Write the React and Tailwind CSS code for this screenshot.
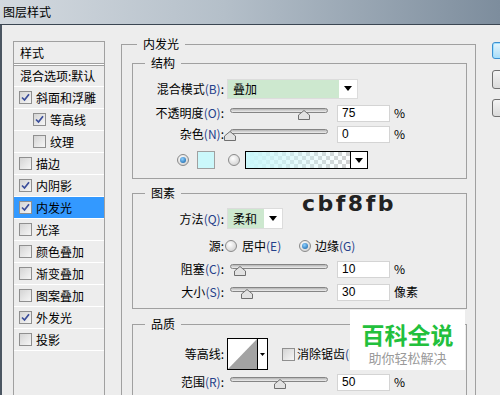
import React from 'react';

const Check = ({ checked }) => (
    <span className="w-[13px] h-[13px] border border-[#8f8f8f] bg-[linear-gradient(135deg,#d4d4d4,#f6f6f6)] flex items-center justify-center shrink-0">
        {checked && (
            <svg width="9" height="9" viewBox="0 0 9 9">
                <path d="M1 4.5 L3.5 7 L8 1.2" stroke="#3a4d9a" strokeWidth="1.7" fill="none" />
            </svg>
        )}
    </span>
);

const Radio = ({ on }) => (
    <span className="w-[12px] h-[12px] rounded-full border border-[#8a8a8a] bg-[radial-gradient(circle_at_40%_35%,#ffffff,#c8c8c8)] flex items-center justify-center shrink-0">
        {on && <span className="w-[6px] h-[6px] rounded-full bg-[radial-gradient(circle_at_40%_35%,#8fd0ff,#0a5aa0)]" />}
    </span>
);

const Arrow = () => (
    <svg width="8" height="5" viewBox="0 0 8 5">
        <path d="M0 0 H8 L4 5 Z" fill="#000" />
    </svg>
);

const Label = ({ text, keyChar }) => (
    <span className="w-[91px] text-right shrink-0 whitespace-nowrap">
        {text}
        {keyChar && <span className="text-[#24408a]">({keyChar})</span>}:
    </span>
);

const Slider = ({ pos }) => (
    <div className="relative w-[98px] h-[20px] ml-[6px] shrink-0">
        <div className="absolute left-0 right-0 top-[5px] h-[5px] rounded-full border border-[#858585] bg-[linear-gradient(#b5b5b5,#eeeeee)]" />
        <svg className="absolute top-[7px]" style={{ left: pos - 6 }} width="12" height="10" viewBox="0 0 12 10">
            <path d="M0.5 9.5 V5 L6 0.5 L11.5 5 V9.5 Z" fill="#e2e2e2" stroke="#6f6f6f" />
        </svg>
    </div>
);

const NumBox = ({ value }) => (
    <div className="ml-[9px] w-[53px] h-[17px] border border-[#d4d4d4] bg-white pl-[4px] text-[12px] leading-[15px] font-['Liberation_Sans'] shrink-0">
        {value}
    </div>
);

const SliderRow = ({ text, keyChar, pos, value, unit, className }) => (
    <div className={`flex items-center h-[20px] ${className}`}>
        <Label text={text} keyChar={keyChar} />
        <Slider pos={pos} />
        <NumBox value={value} />
        <span className="ml-[4px]">{unit}</span>
    </div>
);

const styles = [
    { name: '斜面和浮雕', checked: true },
    { name: '等高线', checked: true, indent: true },
    { name: '纹理', checked: false, indent: true },
    { name: '描边', checked: false },
    { name: '内阴影', checked: true },
    { name: '内发光', checked: true, active: true },
    { name: '光泽', checked: false },
    { name: '颜色叠加', checked: false },
    { name: '渐变叠加', checked: false },
    { name: '图案叠加', checked: false },
    { name: '外发光', checked: true },
    { name: '投影', checked: false },
];

export default function App() {
    return (
        <div className="relative w-[500px] h-[395px] overflow-hidden bg-[#ededed] text-[12px] leading-[14px] text-black font-['Noto_Sans_CJK_SC',sans-serif]">
            {/* Title bar */}
            <div className="h-[25px] border-b border-[#3b4652] bg-[linear-gradient(to_right,#d3d9df,#b4bfc9_45%,#7d8d9d)] flex items-center pl-[3px]">
                <span className="text-[12px]">图层样式</span>
            </div>

            <div className="flex items-start border-l-[2px] border-[#4b5662] h-[370px]">
                {/* Style list */}
                <div className="ml-[11px] mt-[16px] w-[92px] h-[360px] shrink-0 border border-b-0 border-[#a0a0a0]">
                    <div className="h-[21px] flex items-center pl-[6px]">样式</div>
                    <div className="h-[3px] border-y border-[#a0a0a0] bg-white" />
                    <div className="h-[21px] flex items-center pl-[6px] border-b border-white whitespace-nowrap">混合选项:默认</div>
                    {styles.map(s => (
                        <div
                            key={s.name}
                            className={`h-[22px] flex items-center gap-[4px] border-b border-white ${s.indent ? 'pl-[19px]' : 'pl-[5px]'} ${s.active ? 'bg-[#3399ff]' : ''}`}
                        >
                            <Check checked={s.checked} />
                            <span>{s.name}</span>
                        </div>
                    ))}
                </div>

                {/* Inner glow panel */}
                <fieldset className="ml-[16px] mt-[12px] w-[355px] h-[380px] shrink-0 border border-[#a0a0a0] pl-[10px] pr-[8px] pt-[5px]">
                    <legend className="ml-[5px] px-[6px] leading-[14px]">内发光</legend>

                    <fieldset className="border border-[#a0a0a0] pb-[8px]">
                        <legend className="ml-[12px] px-[6px] leading-[14px]">结构</legend>
                        <div className="flex items-center h-[21px] mt-[8px]">
                            <Label text="混合模式" keyChar="B" />
                            <div className="ml-[3px] w-[131px] h-[20px] flex border border-[#dcdcdc] bg-white shrink-0">
                                <div className="flex-1 bg-[#cde8cf] flex items-center pl-[5px]">叠加</div>
                                <div className="w-[18px] flex items-center justify-center">
                                    <Arrow />
                                </div>
                            </div>
                        </div>
                        <SliderRow className="mt-[4px]" text="不透明度" keyChar="O" pos={74} value="75" unit="%" />
                        <SliderRow className="mt-[1px]" text="杂色" keyChar="N" pos={0} value="0" unit="%" />
                        <div className="flex items-center h-[20px] mt-[6px] pl-[44px]">
                            <Radio on />
                            <div className="ml-[8px] w-[18px] h-[18px] border border-[#a0a0a0] bg-[#cbf8fb]" />
                            <div className="ml-[13px]">
                                <Radio />
                            </div>
                            <div className="ml-[5px] w-[123px] h-[18px] flex border border-black">
                                <div className="flex-1 bg-[linear-gradient(to_right,#cbf8fb,rgba(203,248,251,0)),repeating-conic-gradient(#d2d2d2_0%_25%,#ffffff_0%_50%)] bg-[length:100%_100%,8px_8px]" />
                                <div className="w-[17px] border-l border-black bg-white flex items-center justify-center">
                                    <Arrow />
                                </div>
                            </div>
                        </div>
                    </fieldset>

                    <fieldset className="mt-[7px] border border-[#a0a0a0] pb-[6px]">
                        <legend className="ml-[12px] px-[6px] leading-[14px]">图素</legend>
                        <div className="flex items-center h-[21px] mt-[8px]">
                            <Label text="方法" keyChar="Q" />
                            <div className="ml-[3px] w-[56px] h-[21px] flex border border-[#dcdcdc] bg-white shrink-0">
                                <div className="flex-1 bg-[#cde8cf] flex items-center pl-[5px]">柔和</div>
                                <div className="w-[18px] flex items-center justify-center">
                                    <Arrow />
                                </div>
                            </div>
                        </div>
                        <div className="flex items-center h-[20px] mt-[7px]">
                            <Label text="源" />
                            <div className="ml-[1px] w-[74px] flex items-center gap-[5px]">
                                <Radio />
                                <span>居中<span className="text-[#24408a]">(E)</span></span>
                            </div>
                            <div className="flex items-center gap-[4px]">
                                <Radio on />
                                <span>边缘<span className="text-[#24408a]">(G)</span></span>
                            </div>
                        </div>
                        <SliderRow className="mt-[3px]" text="阻塞" keyChar="C" pos={10} value="10" unit="%" />
                        <SliderRow className="mt-[3px]" text="大小" keyChar="S" pos={17} value="30" unit="像素" />
                    </fieldset>

                    <fieldset className="mt-[8px] h-[90px] border border-[#a0a0a0]">
                        <legend className="ml-[12px] px-[6px] leading-[14px]">品质</legend>
                        <div className="flex items-center h-[32px] mt-[7px]">
                            <Label text="等高线" />
                            <div className="ml-[3px] w-[41px] h-[32px] flex border border-black bg-white shrink-0">
                                <svg width="29" height="30" viewBox="0 0 29 30" className="shrink-0">
                                    <path d="M0 30 L29 0 V30 Z" fill="#a3a3a3" />
                                </svg>
                                <div className="flex-1 border-l border-black flex items-center justify-center">
                                    <svg width="5" height="3" viewBox="0 0 5 3">
                                        <path d="M0 0 H5 L2.5 3 Z" fill="#000" />
                                    </svg>
                                </div>
                            </div>
                            <div className="ml-[14px] flex items-center gap-[2px]">
                                <Check />
                                <span className="whitespace-nowrap">消除锯齿<span className="text-[#24408a]">(L)</span></span>
                            </div>
                        </div>
                        <SliderRow className="mt-[2px]" text="范围" keyChar="R" pos={50} value="50" unit="%" />
                    </fieldset>
                </fieldset>

                {/* Dialog buttons */}
                <div className="ml-[16px] mt-[17px] flex flex-col shrink-0">
                    <div className="w-[80px] h-[17px] rounded-[3px] border border-[#3c8fd0] bg-[linear-gradient(#e8f6fd,#a9dcf7)] shadow-[inset_0_0_0_1px_#9fe0ff]" />
                    <div className="mt-[11px] w-[80px] h-[19px] rounded-[3px] border border-[#707070] bg-[linear-gradient(#f4f4f4,#dadada)]" />
                    <div className="mt-[10px] w-[80px] h-[18px] rounded-[3px] border border-[#707070] bg-[linear-gradient(#f4f4f4,#dadada)]" />
                </div>
            </div>

            {/* Colour annotation */}
            <div className="absolute left-[302px] top-[190px] text-[22px] leading-[28px] font-bold tracking-[2.5px] text-[#222] font-['DejaVu_Sans']">
                cbf8fb
            </div>

            {/* Watermark */}
            <div className="absolute left-[350px] top-[310px] w-[115px] h-[60px] bg-white flex flex-col items-center pt-[11px]">
                <span className="text-[23px] leading-[27px] font-bold text-[#22c03c]">百科全说</span>
                <span className="mt-[2px] text-[13px] leading-[16px] text-[#9a9a9a]">助你轻松解决</span>
            </div>
        </div>
    );
}
